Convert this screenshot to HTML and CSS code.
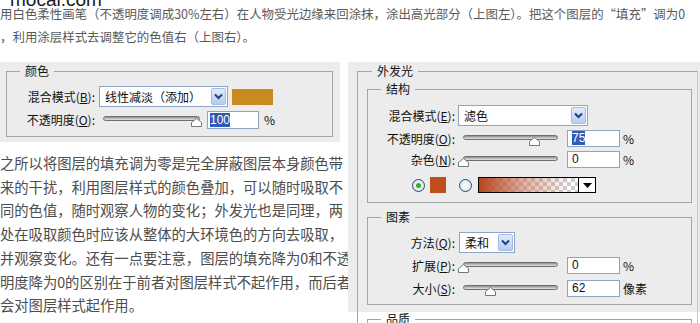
FILE: index.html
```html
<!DOCTYPE html>
<html lang="zh-CN">
<head>
    <meta charset="UTF-8">
    <meta name="viewport" content="width=device-width, initial-scale=1.0">
    <title>图层样式 - 外发光</title>
    <link rel="stylesheet" href="styles.css">
</head>
<body>
    <!-- 水印 -->
    <div class="watermark">mocal.com</div>

    <!-- 上方说明 -->
    <p class="intro">用白色柔性画笔（不透明度调成30%左右）在人物受光边缘来回涂抹，涂出高光部分（上图左）。把这个图层的“填充”调为0<br>，利用涂层样式去调整它的色值右（上图右）。</p>

    <div class="main">
        <div class="left-col">
            <!-- 颜色叠加面板 -->
            <div class="panel panel-color">
                <fieldset class="group">
                    <legend>颜色</legend>
                    <div class="row row-select">
                        <label class="lbl lbl-left">混合模式(<u>B</u>):</label>
                        <div class="select select-blend">
                            <span class="select-text">线性减淡（添加）</span>
                            <span class="arrow"><svg width="9" height="7" viewBox="0 0 9 7"><path d="M1 1.5 L4.5 5 L8 1.5" fill="none" stroke="#1f3f86" stroke-width="2"/></svg></span>
                        </div>
                        <div class="swatch swatch-gold"></div>
                    </div>
                    <div class="row row-gap">
                        <label class="lbl lbl-left">不透明度(<u>O</u>):</label>
                        <div class="slider slider-left">
                            <div class="track"></div>
                            <svg class="thumb" style="left: 96%" width="11" height="9" viewBox="0 0 11 9"><path d="M0.5 8.5 V4.5 L5.5 0.5 L10.5 4.5 V8.5 Z" fill="#fff" stroke="#777"/></svg>
                        </div>
                        <div class="num num-left"><span class="hl">100</span></div>
                        <span class="unit">%</span>
                    </div>
                </fieldset>
            </div>

            <!-- 正文 -->
            <p class="body-text">之所以将图层的填充调为零是完全屏蔽图层本身颜色带<br>来的干扰，利用图层样式的颜色叠加，可以随时吸取不<br>同的色值，随时观察人物的变化；外发光也是同理，两<br>处在吸取颜色时应该从整体的大环境色的方向去吸取，<br>并观察变化。还有一点要注意，图层的填充降为0和不透<br>明度降为0的区别在于前者对图层样式不起作用，而后者<br>会对图层样式起作用。</p>
        </div>

        <!-- 外发光面板 -->
        <div class="panel panel-glow">
            <fieldset class="group outer">
                <legend class="legend-outer">外发光</legend>

                <fieldset class="group inner">
                    <legend>结构</legend>
                    <div class="row row-select">
                        <label class="lbl">混合模式(<u>E</u>):</label>
                        <div class="select select-mode">
                            <span class="select-text">滤色</span>
                            <span class="arrow"><svg width="9" height="7" viewBox="0 0 9 7"><path d="M1 1.5 L4.5 5 L8 1.5" fill="none" stroke="#1f3f86" stroke-width="2"/></svg></span>
                        </div>
                    </div>
                    <div class="row row-gap">
                        <label class="lbl">不透明度(<u>O</u>):</label>
                        <div class="slider">
                            <div class="track"></div>
                            <svg class="thumb" style="left: 75%" width="11" height="9" viewBox="0 0 11 9"><path d="M0.5 8.5 V4.5 L5.5 0.5 L10.5 4.5 V8.5 Z" fill="#fff" stroke="#777"/></svg>
                        </div>
                        <div class="num"><span class="hl">75</span></div>
                        <span class="unit">%</span>
                    </div>
                    <div class="row row-gap">
                        <label class="lbl">杂色(<u>N</u>):</label>
                        <div class="slider">
                            <div class="track"></div>
                            <svg class="thumb" style="left: 0%" width="11" height="9" viewBox="0 0 11 9"><path d="M0.5 8.5 V4.5 L5.5 0.5 L10.5 4.5 V8.5 Z" fill="#fff" stroke="#777"/></svg>
                        </div>
                        <div class="num">0</div>
                        <span class="unit">%</span>
                    </div>
                    <div class="row row-color">
                        <span class="radio on"></span>
                        <div class="swatch swatch-rust"></div>
                        <span class="radio radio-second"></span>
                        <div class="grad">
                            <div class="grad-fill"></div>
                            <div class="grad-btn"><svg width="9" height="5" viewBox="0 0 9 5"><polygon points="0,0 9,0 4.5,5" fill="#000"/></svg></div>
                        </div>
                    </div>
                </fieldset>

                <fieldset class="group inner">
                    <legend>图素</legend>
                    <div class="row row-select">
                        <label class="lbl">方法(<u>Q</u>):</label>
                        <div class="select select-method">
                            <span class="select-text">柔和</span>
                            <span class="arrow"><svg width="9" height="7" viewBox="0 0 9 7"><path d="M1 1.5 L4.5 5 L8 1.5" fill="none" stroke="#1f3f86" stroke-width="2"/></svg></span>
                        </div>
                    </div>
                    <div class="row row-gap">
                        <label class="lbl">扩展(<u>P</u>):</label>
                        <div class="slider">
                            <div class="track"></div>
                            <svg class="thumb" style="left: 0%" width="11" height="9" viewBox="0 0 11 9"><path d="M0.5 8.5 V4.5 L5.5 0.5 L10.5 4.5 V8.5 Z" fill="#fff" stroke="#777"/></svg>
                        </div>
                        <div class="num">0</div>
                        <span class="unit">%</span>
                    </div>
                    <div class="row row-gap-lg">
                        <label class="lbl">大小(<u>S</u>):</label>
                        <div class="slider">
                            <div class="track"></div>
                            <svg class="thumb" style="left: 28%" width="11" height="9" viewBox="0 0 11 9"><path d="M0.5 8.5 V4.5 L5.5 0.5 L10.5 4.5 V8.5 Z" fill="#fff" stroke="#777"/></svg>
                        </div>
                        <div class="num">62</div>
                        <span class="unit">像素</span>
                    </div>
                </fieldset>

                <fieldset class="group inner quality">
                    <legend>品质</legend>
                </fieldset>
            </fieldset>
        </div>
    </div>
</body>
</html>
```

FILE: styles.css
```css
/* Reset */
* {
    margin: 0;
    padding: 0;
    box-sizing: border-box;
}

body {
    width: 700px;
    height: 323px;
    overflow: hidden;
    position: relative;
    background: #fff;
    color: #111;
    font-family: "Noto Sans CJK SC", "Noto Sans", sans-serif;
}

.watermark {
    position: absolute;
    left: 10px;
    top: -11px;
    font-family: "Liberation Sans", Arial, sans-serif;
    font-size: 19px;
    line-height: 22px;
    color: #1a1a1a;
}

.intro {
    padding-top: 3px;
    font-size: 12.45px;
    line-height: 23px;
    color: #5a5a5a;
    white-space: nowrap;
}

.main {
    display: flex;
    align-items: flex-start;
    gap: 8px;
    margin-top: 13px;
}

.left-col {
    width: 340px;
    flex: none;
}

/* Painéis cinza */
.panel {
    background: #ececec;
}

.panel-color {
    padding: 1px 7px 5px 6px;
}

.panel-glow {
    width: 352px;
    height: 250px;
    flex: none;
    padding: 1px 2px 0 9px;
}

.group {
    border: 1px solid #a4a4a4;
    padding: 7px 4px 7px 4px;
    min-width: 0;
}

legend {
    font-size: 12px;
    line-height: 16px;
    padding: 0 5px;
    margin-left: 9px;
    color: #111;
}

.outer {
    padding: 2px 5px 0 9px;
    border-right-color: #c4c4c4;
}

.legend-outer {
    margin-left: 5px;
}

.inner {
    padding: 8px 4px 9px 4px;
}

.inner + .inner {
    margin-top: 6px;
    padding: 7px 4px 7px 4px;
}

.quality {
    margin-top: 5px;
    height: 40px;
}

/* Linhas */
.row {
    display: flex;
    align-items: center;
    font-size: 12px;
    line-height: 16px;
}

.row-select {
    height: 21px;
}

.row-gap {
    margin-top: 4px;
    height: 17px;
}

.panel-color .row-gap {
    height: 18px;
}

.row-gap-lg {
    margin-top: 6px;
    height: 17px;
}

.row-color {
    margin-top: 9px;
    height: 16px;
    padding-left: 40px;
}

.lbl {
    width: 83px;
    text-align: right;
    flex: none;
}

.lbl-left {
    width: 84px;
}

u {
    text-decoration: underline;
    text-underline-offset: 1px;
}

/* Select */
.select {
    display: flex;
    align-items: center;
    height: 21px;
    margin-left: 3px;
    padding-left: 5px;
    background: #fff;
    border: 1px solid #8ea4c4;
    flex: none;
}

.select-blend {
    width: 129px;
    margin-left: 4px;
}

.select-mode {
    width: 130px;
}

.select-method {
    width: 56px;
    margin-left: 4px;
}

.select-text {
    flex: 1;
    white-space: nowrap;
    font-size: 12px;
}

.arrow {
    width: 15px;
    height: 17px;
    margin-right: 1px;
    display: flex;
    align-items: center;
    justify-content: center;
    background: linear-gradient(#e2eafa, #b8ccef);
    border: 1px solid #a3bce6;
    border-radius: 2px;
}

.swatch {
    flex: none;
}

.swatch-gold {
    width: 41px;
    height: 16px;
    margin-left: 4px;
    background: #c98b1f;
}

.swatch-rust {
    width: 16px;
    height: 16px;
    margin-left: 5px;
    background: #bf4e1c;
}

/* Slider */
.slider {
    position: relative;
    width: 95px;
    height: 14px;
    margin-left: 8px;
    flex: none;
}

.slider-left {
    width: 97px;
}

.track {
    position: absolute;
    left: 0;
    right: 0;
    top: 3px;
    height: 5px;
    border-radius: 3px;
    border: 1px solid #6f6f6f;
    background: linear-gradient(#8f8f8f, #e6e6e6);
}

.thumb {
    position: absolute;
    top: 5px;
    margin-left: -5px;
}

/* Campos numéricos */
.num {
    width: 53px;
    height: 17px;
    margin-left: 9px;
    padding-left: 4px;
    background: #fff;
    border: 1px solid #8ea4c4;
    font-family: "Liberation Sans", Arial, sans-serif;
    font-size: 12px;
    line-height: 15px;
    flex: none;
}

.num-left {
    width: 52px;
    height: 18px;
    margin-left: 7px;
    padding-left: 2px;
    line-height: 16px;
}

.hl {
    background: #2d5cb6;
    color: #fff;
}

.unit {
    margin-left: 3px;
}

.panel-color .unit {
    margin-left: 5px;
}

/* Rádio e degradê */
.radio {
    width: 13px;
    height: 13px;
    border-radius: 50%;
    border: 1px solid #1f4e7a;
    background: radial-gradient(#fff, #dadada);
    display: flex;
    align-items: center;
    justify-content: center;
    flex: none;
}

.radio.on::after {
    content: "";
    width: 5px;
    height: 5px;
    border-radius: 50%;
    background: #2fae2f;
}

.radio-second {
    margin-left: 13px;
}

.grad {
    display: flex;
    width: 118px;
    height: 16px;
    margin-left: 6px;
    border: 1px solid #000;
    flex: none;
}

.grad-fill {
    flex: 1;
    background:
        linear-gradient(to right, #b5461f, rgba(205, 110, 85, 0.55) 45%, rgba(255, 255, 255, 0) 92%),
        repeating-conic-gradient(#cdcdcd 0 25%, #fff 0 50%) 0 0 / 8px 8px;
}

.grad-btn {
    width: 17px;
    border-left: 1px solid #000;
    background: #fff;
    display: flex;
    align-items: center;
    justify-content: center;
}

/* Texto */
.body-text {
    margin-top: 9px;
    font-size: 14.3px;
    line-height: 23.7px;
    color: #4d4d4d;
    white-space: nowrap;
}
```
